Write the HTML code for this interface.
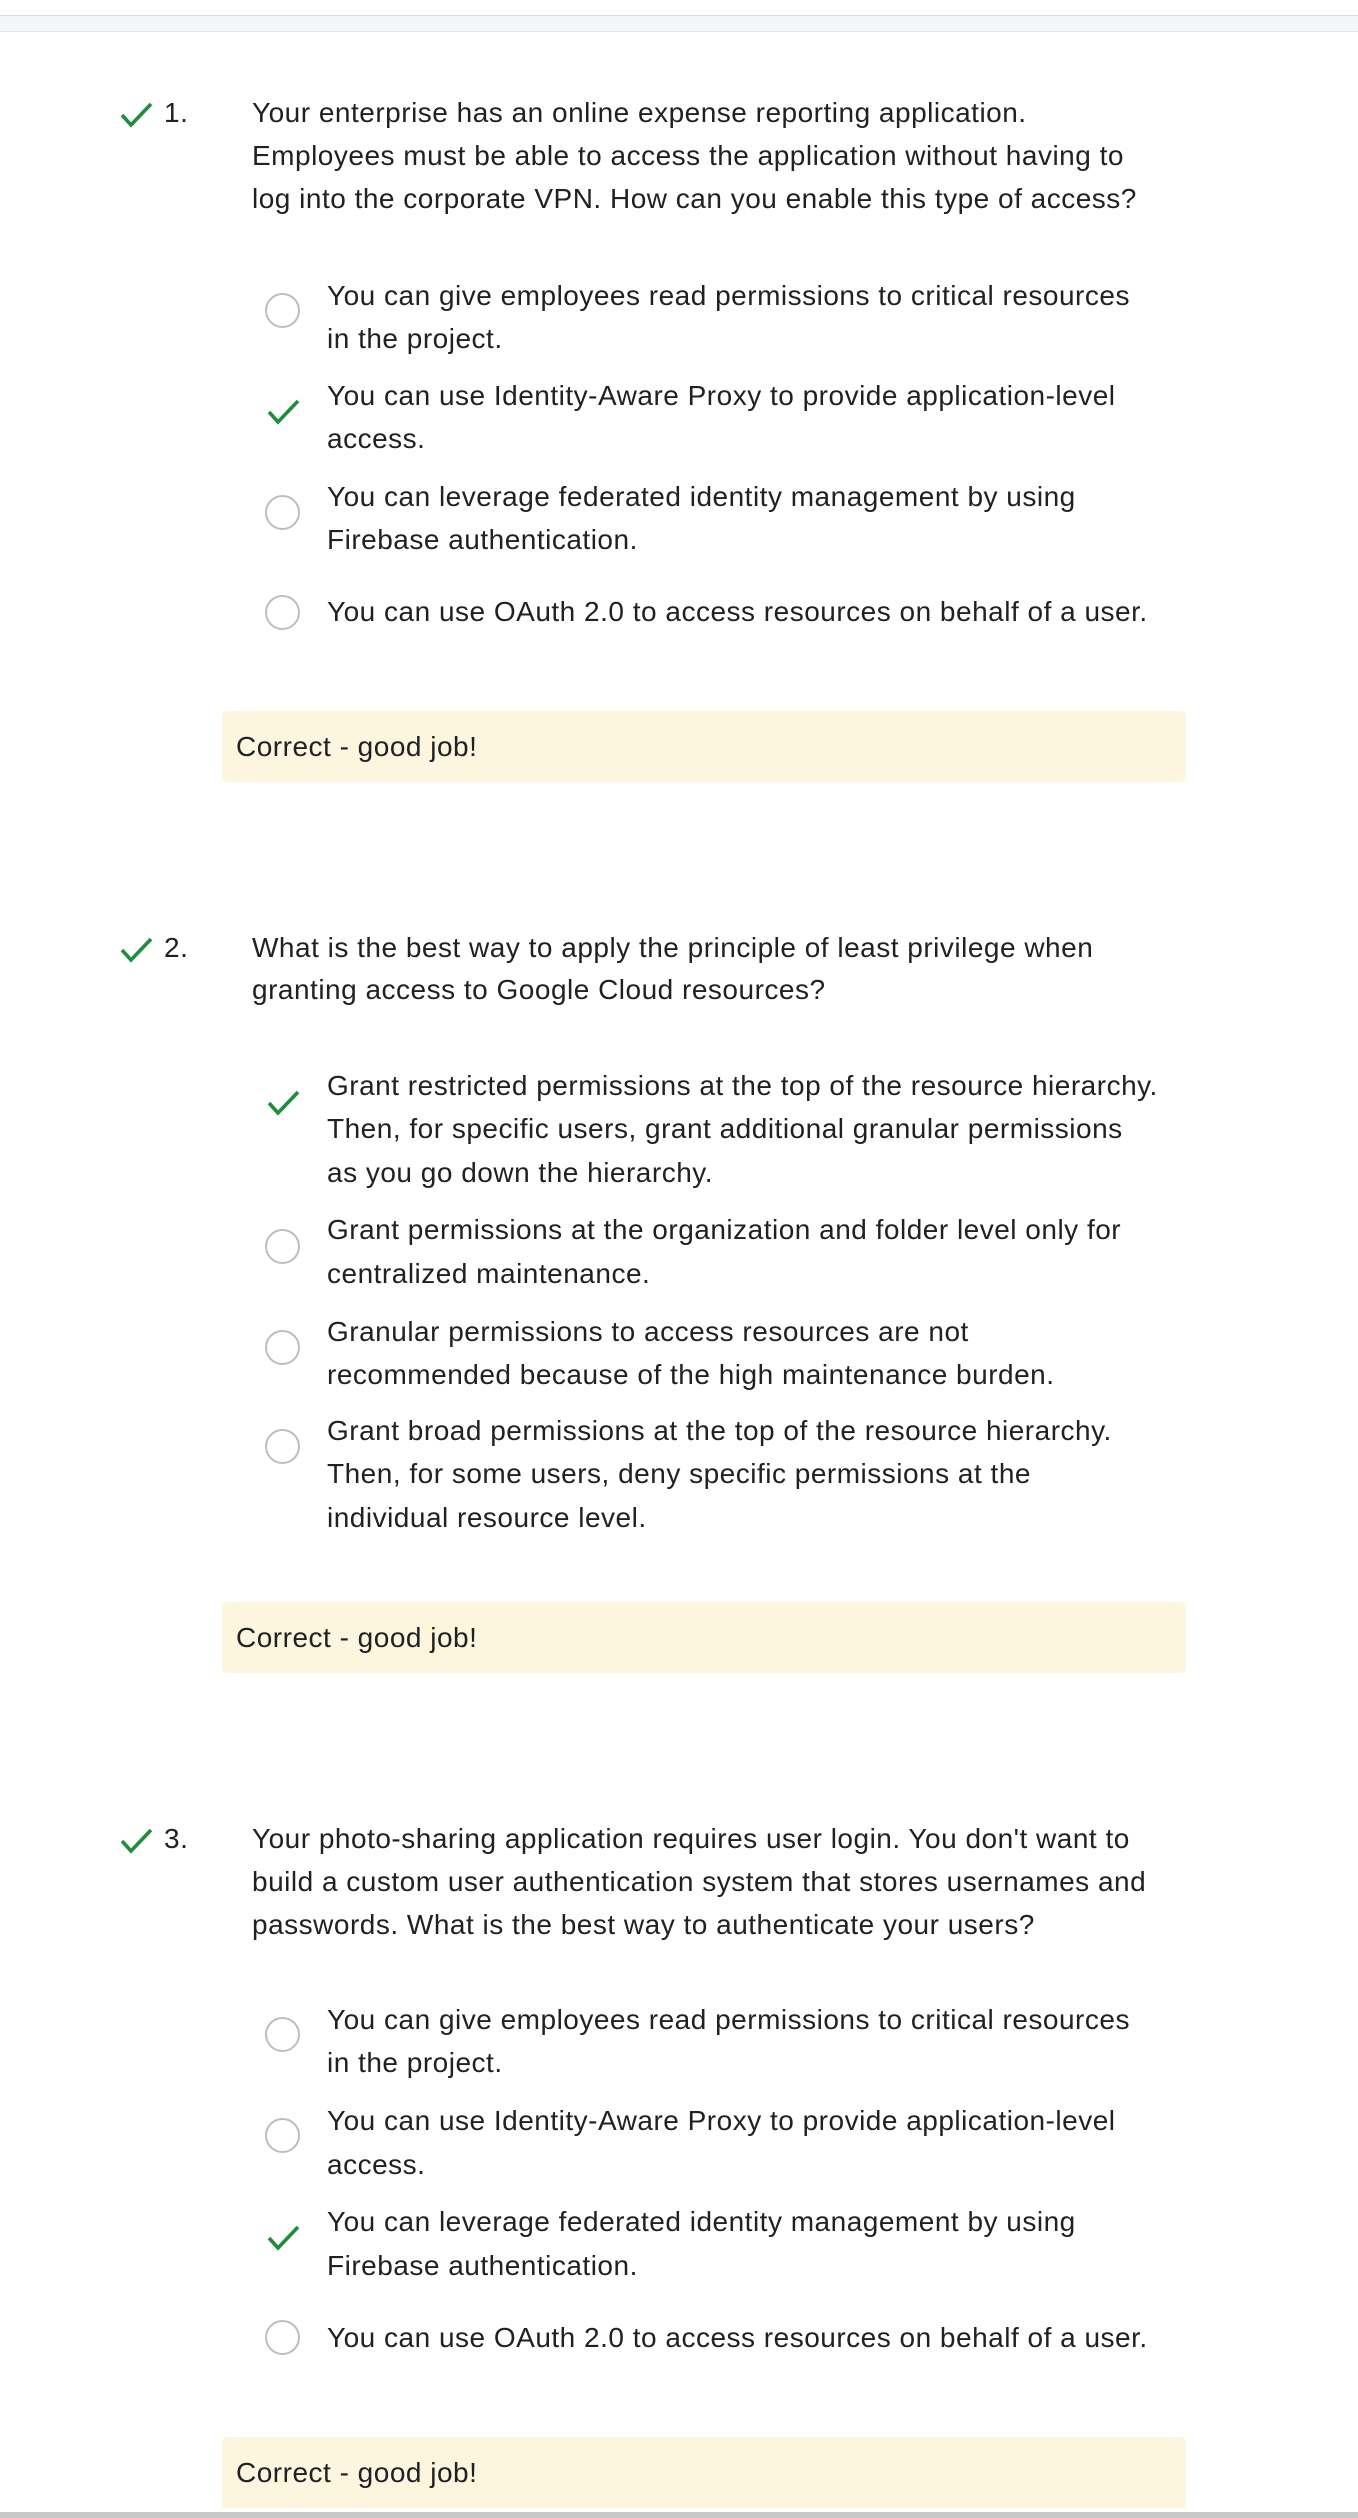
<!DOCTYPE html>
<html><head><meta charset="utf-8"><style>
body{margin:0;width:1358px;height:2518px;position:relative;background:#fff;font-family:"Liberation Sans",Arial,sans-serif;color:#202124;overflow:hidden}
.t{position:absolute;font-size:28px;letter-spacing:0.5px;line-height:43px;white-space:nowrap}
.band{position:absolute;left:0;top:15px;width:1358px;height:15px;background:#f4f5f7;border-top:1px solid #dadce0;border-bottom:1px solid #e3e4e8}
.r{position:absolute;border:2px solid #bdbdbd;border-radius:50%;box-sizing:border-box;width:35px;height:35px}
.box{position:absolute;left:222px;width:964px;height:71px;background:#fdf6de;border-radius:5px}
.box span{position:absolute;left:14px;top:14px;font-size:28px;letter-spacing:0.5px;line-height:43px}
svg{position:absolute}
.bot{position:absolute;left:0;top:2512px;width:1358px;height:6px;background:#c8c8c8}
</style></head><body>
<div class="band"></div>

<!-- Q1 -->
<svg style="left:119px;top:100px" width="36" height="30" viewBox="0 0 36 30"><path d="M3 15 L12 25 L32 4" fill="none" stroke="#1e8e3e" stroke-width="3.6"/></svg>
<div class="t" style="left:164px;top:91px">1.</div>
<div class="t" style="left:252px;top:91px">Your enterprise has an online expense reporting application.</div>
<div class="t" style="left:252px;top:134px">Employees must be able to access the application without having to</div>
<div class="t" style="left:252px;top:177px">log into the corporate VPN. How can you enable this type of access?</div>

<div class="r" style="left:265px;top:293px"></div>
<div class="t" style="left:327px;top:274px">You can give employees read permissions to critical resources</div>
<div class="t" style="left:327px;top:317px">in the project.</div>
<svg style="left:266px;top:397px" width="36" height="30" viewBox="0 0 36 30"><path d="M3 15 L12 25 L32 4" fill="none" stroke="#1e8e3e" stroke-width="3.6"/></svg>
<div class="t" style="left:327px;top:374px">You can use Identity-Aware Proxy to provide application-level</div>
<div class="t" style="left:327px;top:417px">access.</div>
<div class="r" style="left:265px;top:495px"></div>
<div class="t" style="left:327px;top:475px">You can leverage federated identity management by using</div>
<div class="t" style="left:327px;top:518px">Firebase authentication.</div>
<div class="r" style="left:265px;top:595px"></div>
<div class="t" style="left:327px;top:590px">You can use OAuth 2.0 to access resources on behalf of a user.</div>
<div class="box" style="top:711px"><span>Correct - good job!</span></div>

<!-- Q2 -->
<svg style="left:119px;top:935px" width="36" height="30" viewBox="0 0 36 30"><path d="M3 15 L12 25 L32 4" fill="none" stroke="#1e8e3e" stroke-width="3.6"/></svg>
<div class="t" style="left:164px;top:926px">2.</div>
<div class="t" style="left:252px;top:926px">What is the best way to apply the principle of least privilege when</div>
<div class="t" style="left:252px;top:968px">granting access to Google Cloud resources?</div>

<svg style="left:266px;top:1088px" width="36" height="30" viewBox="0 0 36 30"><path d="M3 15 L12 25 L32 4" fill="none" stroke="#1e8e3e" stroke-width="3.6"/></svg>
<div class="t" style="left:327px;top:1064px">Grant restricted permissions at the top of the resource hierarchy.</div>
<div class="t" style="left:327px;top:1107px">Then, for specific users, grant additional granular permissions</div>
<div class="t" style="left:327px;top:1151px">as you go down the hierarchy.</div>
<div class="r" style="left:265px;top:1229px"></div>
<div class="t" style="left:327px;top:1208px">Grant permissions at the organization and folder level only for</div>
<div class="t" style="left:327px;top:1252px">centralized maintenance.</div>
<div class="r" style="left:265px;top:1330px"></div>
<div class="t" style="left:327px;top:1310px">Granular permissions to access resources are not</div>
<div class="t" style="left:327px;top:1353px">recommended because of the high maintenance burden.</div>
<div class="r" style="left:265px;top:1429px"></div>
<div class="t" style="left:327px;top:1409px">Grant broad permissions at the top of the resource hierarchy.</div>
<div class="t" style="left:327px;top:1452px">Then, for some users, deny specific permissions at the</div>
<div class="t" style="left:327px;top:1496px">individual resource level.</div>
<div class="box" style="top:1602px"><span>Correct - good job!</span></div>

<!-- Q3 -->
<svg style="left:119px;top:1826px" width="36" height="30" viewBox="0 0 36 30"><path d="M3 15 L12 25 L32 4" fill="none" stroke="#1e8e3e" stroke-width="3.6"/></svg>
<div class="t" style="left:164px;top:1817px">3.</div>
<div class="t" style="left:252px;top:1817px">Your photo-sharing application requires user login. You don't want to</div>
<div class="t" style="left:252px;top:1860px">build a custom user authentication system that stores usernames and</div>
<div class="t" style="left:252px;top:1903px">passwords. What is the best way to authenticate your users?</div>

<div class="r" style="left:265px;top:2017px"></div>
<div class="t" style="left:327px;top:1998px">You can give employees read permissions to critical resources</div>
<div class="t" style="left:327px;top:2041px">in the project.</div>
<div class="r" style="left:265px;top:2118px"></div>
<div class="t" style="left:327px;top:2099px">You can use Identity-Aware Proxy to provide application-level</div>
<div class="t" style="left:327px;top:2143px">access.</div>
<svg style="left:266px;top:2223px" width="36" height="30" viewBox="0 0 36 30"><path d="M3 15 L12 25 L32 4" fill="none" stroke="#1e8e3e" stroke-width="3.6"/></svg>
<div class="t" style="left:327px;top:2200px">You can leverage federated identity management by using</div>
<div class="t" style="left:327px;top:2244px">Firebase authentication.</div>
<div class="r" style="left:265px;top:2320px"></div>
<div class="t" style="left:327px;top:2316px">You can use OAuth 2.0 to access resources on behalf of a user.</div>
<div class="box" style="top:2437px"><span>Correct - good job!</span></div>

<div class="bot"></div>
</body></html>
